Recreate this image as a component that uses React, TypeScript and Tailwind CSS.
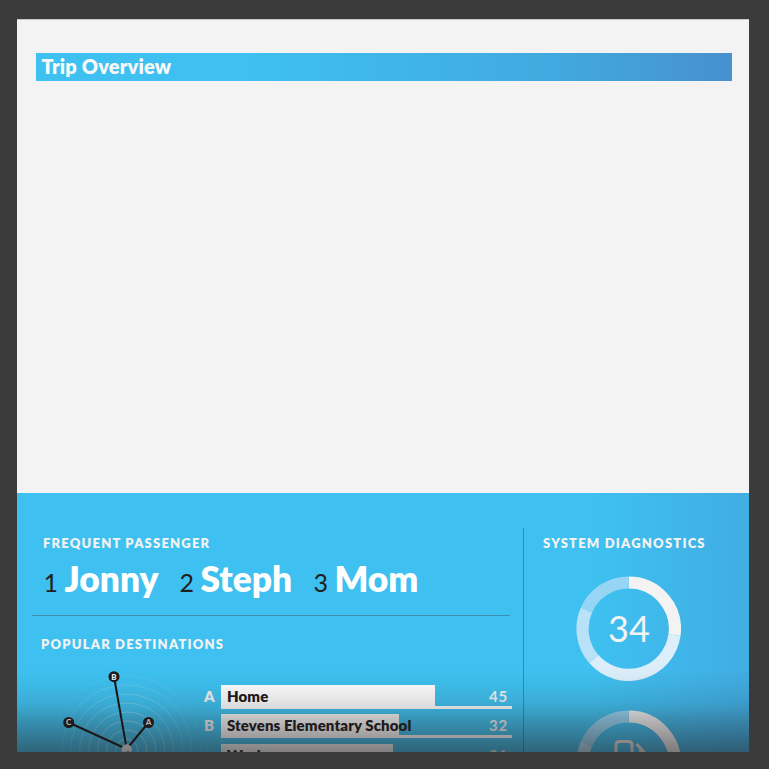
type Destination = { id: string; label: string; name: string; count: number; width: string };

const destinations: Destination[] = [
  { id: 'home', label: 'A', name: 'Home', count: 45, width: 'w-[214px]' },
  { id: 'school', label: 'B', name: 'Stevens Elementary School', count: 32, width: 'w-[178px]' },
  { id: 'work', label: '', name: 'Work', count: 31, width: 'w-[172px]' },
];

const pins = [
  { id: 'A', x: 96.5, y: 54.5 },
  { id: 'B', x: 62, y: 8.7 },
  { id: 'C', x: 16.7, y: 54.5 },
];

const rings = [11, 20, 29, 38, 47, 56, 65, 74];

function point(radius: number, degrees: number) {
  const a = ((degrees - 90) * Math.PI) / 180;
  return `${(52.5 + radius * Math.cos(a)).toFixed(2)} ${(52.5 + radius * Math.sin(a)).toFixed(2)}`;
}

function Arc({ from, to, color }: { from: number; to: number; color: string }) {
  const large = to - from > 180 ? 1 : 0;
  return (
    <path
      d={`M${point(46.2, from)} A46.2 46.2 0 ${large} 1 ${point(46.2, to)}`}
      fill="none"
      stroke={color}
      strokeWidth="12.2"
    />
  );
}

function Donut() {
  return (
    <svg className="absolute inset-0 size-[105px]" viewBox="-0.2 -0.2 105 105">
      <Arc from={0} to={98} color="#f3f3f3" />
      <Arc from={98} to={229} color="#dceefa" />
      <Arc from={229} to={294} color="#b9e2f8" />
      <Arc from={294} to={360} color="#97d5f4" />
    </svg>
  );
}

function Heading({ children, className }: { children: string; className: string }) {
  return (
    <h2
      className={`text-[13px] leading-[16px] font-extrabold tracking-[1.2px] whitespace-nowrap text-[#f3f3f3] ${className}`}
    >
      {children}
    </h2>
  );
}

function Passenger({ rank, name, className }: { rank: number; name: string; className: string }) {
  return (
    <li className={`flex shrink-0 items-baseline ${className}`}>
      <span className="w-[21px] text-[25px] leading-none text-[#231f20]">{rank}</span>
      <span className="text-[35.3px] leading-[40px] font-extrabold whitespace-nowrap text-white">{name}</span>
    </li>
  );
}

function Radar() {
  return (
    <svg className="ml-[35px] h-[84px] w-[150px] shrink-0" viewBox="0 0 150 84">
      {rings.map((r, i) => (
        <circle
          key={r}
          cx="74.7"
          cy="82"
          r={r}
          fill="none"
          stroke="#f3f3f3"
          strokeWidth="1"
          opacity={0.5 - i * 0.06}
        />
      ))}
      {pins.map((p) => (
        <line key={p.id} x1="74.7" y1="81" x2={p.x} y2={p.y} stroke="#171314" strokeWidth="2" />
      ))}
      <circle cx="74.7" cy="81.5" r="5.2" fill="#f3f3f3" />
      <circle cx="76" cy="85.2" r="2" fill="#6b6768" />
      {pins.map((p) => (
        <g key={p.id}>
          <circle cx={p.x} cy={p.y} r="5.5" fill="#1d191a" />
          <text x={p.x} y={p.y + 2.8} textAnchor="middle" fontSize="8" fontWeight="900" fill="#f3f3f3">
            {p.id}
          </text>
        </g>
      ))}
    </svg>
  );
}

export default function App() {
  return (
    <div className="h-[769px] w-[769px] overflow-hidden bg-[#3b3b3c] pt-[19px] pl-[17px] font-['Lato',sans-serif]">
      <main className="flex h-[733px] w-[732px] flex-col overflow-hidden border-t border-[#c8c8c8] bg-[#f3f3f3]">
        <div className="h-[473px] shrink-0 pt-[33px] pl-[19px]">
          <h1 className="h-[28px] w-[696px] bg-linear-to-r from-[#3ec1f0] from-30% via-[#41a9df] via-75% to-[#4790cf] pl-[5.5px] text-[20px] leading-[27px] font-extrabold tracking-[0.17px] text-[#f8f8f8]">
            Trip Overview
          </h1>
        </div>
        <div className="relative flex h-[259px] shrink-0 overflow-hidden bg-[#3ec1f0]">
          <section className="w-[506px] shrink-0 pt-[42px]">
            <Heading className="pl-[26px]">FREQUENT PASSENGER</Heading>
            <ul className="mt-[8px] flex pl-[26.5px]">
              <Passenger rank={1} name="Jonny" className="w-[136px]" />
              <Passenger rank={2} name="Steph" className="w-[134px]" />
              <Passenger rank={3} name="Mom" className="" />
            </ul>
            <div className="mt-[16px] ml-[15px] h-px w-[478px] bg-[#3f8fb2]" />
            <Heading className="mt-[20px] pl-[24px]">POPULAR DESTINATIONS</Heading>
            <div className="mt-[16px] flex">
              <Radar />
              <ul className="mt-[17px] flex shrink-0 flex-col gap-[5.4px]">
                {destinations.map((d) => (
                  <li key={d.id} className="flex h-[24px] text-[15px] leading-[23px] font-extrabold text-[#f3f3f3]">
                    <span className="w-[19px] pl-[2px]">{d.label}</span>
                    <div className="flex w-[291px] justify-between border-b-[3px] border-white">
                      <div
                        className={`h-[24px] bg-white pl-[6px] tracking-[0.1px] whitespace-nowrap text-[#1d191a] ${d.width}`}
                      >
                        {d.name}
                      </div>
                      <span className="pr-[4px] font-bold tracking-[0.8px]">{d.count}</span>
                    </div>
                  </li>
                ))}
              </ul>
            </div>
          </section>
          <div className="mt-[35px] w-px shrink-0 bg-[#3c88aa]" />
          <section className="flex-1 bg-linear-to-r from-[#3ec1f0] from-30% to-[#40ade3] pt-[42px]">
            <Heading className="pl-[19px]">SYSTEM DIAGNOSTICS</Heading>
            <div className="relative mt-[25px] ml-[52px] flex size-[105px] items-center justify-center">
              <Donut />
              <span className="-mt-[2px] ml-px text-[36px] leading-none font-normal text-[#f3f3f3]">34</span>
            </div>
            <div className="relative mt-[29px] ml-[52px] size-[105px]">
              <Donut />
              <svg
                className="absolute inset-0 size-[105px]"
                viewBox="0 0 105 105"
                fill="none"
                stroke="#f3e6e2"
                strokeWidth="3"
              >
                <path d="M40 72V35q0-3.5 3.5-3.5h9q3.5 0 3.5 3.5V72M60.5 34l8 8.5v10M64.5 38.5v8" />
              </svg>
            </div>
          </section>
          <div className="absolute inset-x-0 bottom-0 h-[90px] bg-[linear-gradient(to_bottom,#231f2000_7%,#231f200c_25%,#231f201d_42%,#231f202c_52%,#231f2043_61%,#231f2070_83%,#231f2092_100%)]" />
        </div>
      </main>
    </div>
  );
}
